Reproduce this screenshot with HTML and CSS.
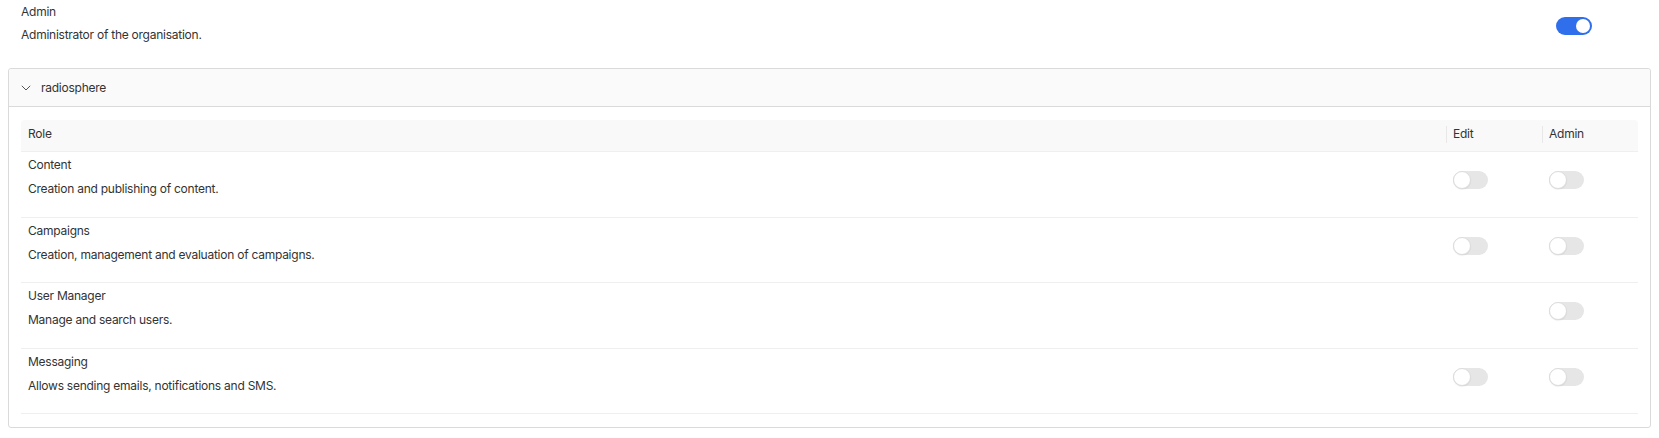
FILE: index.html
```html
<!DOCTYPE html>
<html>
<head>
<meta charset="utf-8">
<link rel="stylesheet" href="styles.css">
</head>
<body>
<div class="page">
  <div class="org-row">
    <div class="org-text">
      <div class="title">Admin</div>
      <div class="desc">Administrator of the organisation.</div>
    </div>
    <span class="switch on"><span class="knob"></span></span>
  </div>

  <div class="panel">
    <div class="panel-head">
      <svg class="chev" width="10" height="6" viewBox="0 0 10 6"><path d="M0.8 0.8 L5 5 L9.2 0.8" fill="none" stroke="#555" stroke-width="1"/></svg>
      <span class="panel-title">radiosphere</span>
    </div>
    <div class="panel-body">
      <div class="table">
        <div class="thead">
          <div class="th role">Role</div>
          <div class="th col sep">Edit</div>
          <div class="th col sep">Admin</div>
        </div>
        <div class="tr">
          <div class="td role">
            <div class="title">Content</div>
            <div class="desc">Creation and publishing of content.</div>
          </div>
          <div class="td col"><span class="switch"><span class="knob"></span></span></div>
          <div class="td col"><span class="switch"><span class="knob"></span></span></div>
        </div>
        <div class="tr">
          <div class="td role">
            <div class="title">Campaigns</div>
            <div class="desc">Creation, management and evaluation of campaigns.</div>
          </div>
          <div class="td col"><span class="switch"><span class="knob"></span></span></div>
          <div class="td col"><span class="switch"><span class="knob"></span></span></div>
        </div>
        <div class="tr">
          <div class="td role">
            <div class="title">User Manager</div>
            <div class="desc">Manage and search users.</div>
          </div>
          <div class="td col"></div>
          <div class="td col"><span class="switch"><span class="knob"></span></span></div>
        </div>
        <div class="tr">
          <div class="td role">
            <div class="title">Messaging</div>
            <div class="desc">Allows sending emails, notifications and SMS.</div>
          </div>
          <div class="td col"><span class="switch"><span class="knob"></span></span></div>
          <div class="td col"><span class="switch"><span class="knob"></span></span></div>
        </div>
      </div>
    </div>
  </div>
</div>
</body>
</html>
```

FILE: styles.css
```css
* { box-sizing: border-box; }
html, body { margin: 0; padding: 0; background: #fff; }
body {
  font-family: Inter, "Noto Sans", "Liberation Sans", sans-serif;
  font-size: 12px;
  letter-spacing: -0.25px;
  color: #333;
}
.page { padding: 0 8px; }

.title { line-height: 16px; }
.desc { line-height: 16px; }

.org-row {
  display: flex;
  align-items: flex-start;
  padding: 4px 59px 0 13px;
  height: 68px;
}
.org-row .org-text { flex: 1; }
.org-row .desc { margin-top: 7px; }
.org-row .switch { margin-top: 13px; }

.switch {
  display: inline-block;
  position: relative;
  width: 35px;
  height: 18px;
  border-radius: 9px;
  background: #e6e6e6;
}
.switch .knob {
  position: absolute;
  left: 0;
  top: 0;
  width: 18px;
  height: 18px;
  border-radius: 50%;
  background: #fff;
  border: 1px solid #dcdcdc;
  box-shadow: 0 1px 1px rgba(0,0,0,0.06);
}
.switch.on {
  width: 36px;
  background: #2f6fec;
}
.switch.on .knob {
  left: auto;
  right: 2px;
  top: 2px;
  width: 14px;
  height: 14px;
  border: none;
  box-shadow: none;
}

.panel {
  border: 1px solid #dadada;
  border-radius: 3px;
}
.panel-head {
  display: flex;
  align-items: center;
  height: 38px;
  padding-left: 12px;
  background: #fafafa;
  border-bottom: 1px solid #dadada;
  border-radius: 3px 3px 0 0;
}
.chev { margin-right: 10px; }
.panel-body { padding: 13px 12px 13px; }

.table { display: flex; flex-direction: column; }
.thead {
  display: flex;
  height: 32px;
  padding-bottom: 3px;
  background: #f9f9f9;
  border-bottom: 1px solid #efefef;
  border-radius: 4px 4px 0 0;
  align-items: center;
}
.th { padding-left: 7px; position: relative; line-height: 16px; }
.role { flex: 1; }
.col { width: 96px; flex: none; }
.th.sep::before {
  content: "";
  position: absolute;
  left: 0;
  top: 0;
  width: 1px;
  height: 17px;
  background: #e8e8e8;
}

.tr {
  display: flex;
  height: 65.5px;
  border-bottom: 1px solid #efefef;
}
.td.role { padding: 5px 7px 0; }
.td.role .desc { margin-top: 8px; }
.td.col { padding: 19px 7px 0; }
```
